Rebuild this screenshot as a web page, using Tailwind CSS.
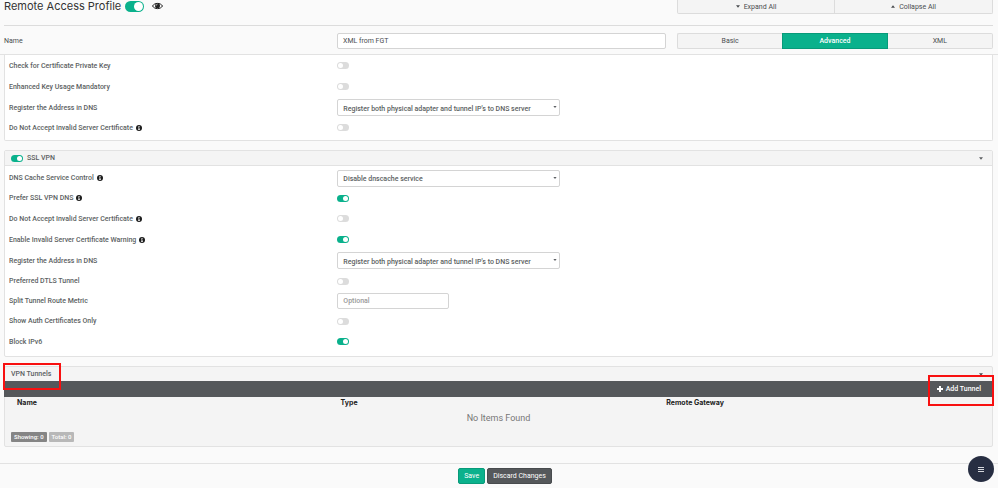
<!DOCTYPE html>
<html lang="en">
  <head>
    <meta charset="UTF-8" />
    <meta name="viewport" content="width=device-width, initial-scale=1.0" />
    <title>Remote Access Profile</title>
    <!-- Tailwind CSS CDN -->
    <script src="https://cdn.jsdelivr.net/npm/@tailwindcss/browser@4"></script>
    <style>
      body {
        font-family: "Roboto", "Liberation Sans", sans-serif;
      }

      /* Switches */
      .switch {
        appearance: none;
        display: block;
        flex: none;
        width: 12px;
        height: 7px;
        padding: 1px;
        border-radius: 7px;
        background: #dcdcdc;
      }
      .switch::before {
        content: "";
        display: block;
        width: 5px;
        height: 5px;
        border-radius: 5px;
        background: #fff;
      }
      .switch:checked {
        background: #0ab18c;
      }
      .switch:checked::before {
        margin-left: auto;
      }
      .switch-lg {
        width: 19px;
        height: 11px;
      }
      .switch-lg::before {
        width: 9px;
        height: 9px;
      }
    </style>
  </head>
  <body class="bg-[#fafafa] min-h-screen flex flex-col text-[7px] leading-[10px] text-[#4a4d50]">
    <!-- Shared icons -->
    <svg class="hidden">
      <symbol id="info" viewBox="0 0 12 12">
        <circle cx="6" cy="6" r="6" fill="#1c1c1c" />
        <path d="M5 2h2v2H5zM4 5h3v4h1v1H4V9h1V6H4z" fill="#fff" />
      </symbol>
      <symbol id="caret-down" viewBox="0 0 8 5">
        <path d="M0 0h8L4 5z" fill="currentColor" />
      </symbol>
      <symbol id="caret-up" viewBox="0 0 8 5">
        <path d="M0 5h8L4 0z" fill="currentColor" />
      </symbol>
    </svg>

    <header class="ml-1 mr-[5px]">
      <div class="h-[26px] border-b border-[#dcdcdc] grid grid-cols-[673fr_316fr] items-start">
        <div class="flex items-center h-3">
          <h1 class="text-[11px] leading-3 text-[#333] font-[Inter]">Remote Access Profile</h1>
          <input type="checkbox" checked aria-label="Enable profile" class="switch switch-lg ml-1" />
          <button type="button" aria-label="Preview" class="ml-2">
            <svg class="w-[11px] h-2 block" viewBox="0 0 22 16">
              <path d="M1 8C5 1 17 1 21 8C17 15 5 15 1 8z" fill="none" stroke="#222" stroke-width="2" />
              <circle cx="11" cy="7.5" r="5" fill="#222" />
              <path d="M8 7.500a3 3 0 0 1 3-3" fill="none" stroke="#fff" stroke-width="1.200" />
            </svg>
          </button>
        </div>
        <div class="grid grid-cols-2 h-[14px] bg-[#f4f4f4] border border-t-0 border-[#dcdcdc] rounded-b-xs">
          <button type="button" class="flex items-center justify-center gap-1 border-r border-[#dcdcdc]">
            <svg class="w-1 h-[3px]"><use href="#caret-down" /></svg>Expand All
          </button>
          <button type="button" class="flex items-center justify-center gap-1">
            <svg class="w-1 h-[3px]"><use href="#caret-up" /></svg>Collapse All
          </button>
        </div>
      </div>
      <div class="h-7 grid grid-cols-[333fr_340fr_316fr] items-center pt-px">
        <label for="name">Name</label>
        <div class="pr-[11px]">
          <input id="name" type="text" value="XML from FGT" class="block w-full h-4 px-[5px] bg-white border border-[#d4d4d4] rounded-xs" />
        </div>
        <div class="grid grid-cols-3 h-4">
          <button type="button" class="bg-[#f4f4f4] border border-r-0 border-[#dcdcdc] rounded-l-xs">Basic</button>
          <button type="button" class="bg-[#0ab18c] border border-[#089a79] text-white font-medium">Advanced</button>
          <button type="button" class="bg-[#f4f4f4] border border-l-0 border-[#dcdcdc] rounded-r-xs">XML</button>
        </div>
      </div>
    </header>

    <main class="border-t border-[#e2e2e2] grow">
      <section class="ml-1 mr-[5px] bg-white border border-t-0 border-[#e2e2e2] rounded-b-xs pb-[3px] font-medium text-[#5c5f62]">
        <div class="grid grid-cols-[1fr_2fr] items-center h-[21px] px-1">
          <label for="private-key">Check for Certificate Private Key</label>
          <input id="private-key" type="checkbox" class="switch ml-0.5" />
        </div>
        <div class="grid grid-cols-[1fr_2fr] items-center h-[21px] px-1">
          <label for="key-usage">Enhanced Key Usage Mandatory</label>
          <input id="key-usage" type="checkbox" class="switch ml-0.5" />
        </div>
        <div class="grid grid-cols-[1fr_2fr] items-center h-[21px] px-1">
          <label for="ipsec-dns">Register the Address in DNS</label>
          <div class="relative ml-0.5 w-[223px]">
            <select id="ipsec-dns" class="appearance-none block w-full h-[17px] pl-[5px] pt-0.5 bg-white border border-[#d4d4d4] rounded-xs">
              <option>Register both physical adapter and tunnel IP's to DNS server</option>
            </select>
            <svg class="absolute right-[3px] top-[7px] w-1 h-0.5"><use href="#caret-down" /></svg>
          </div>
        </div>
        <div class="grid grid-cols-[1fr_2fr] items-center h-[19px] px-1">
          <label for="ipsec-cert" class="flex items-center gap-[3px]">Do Not Accept Invalid Server Certificate<svg class="size-[6px]"><use href="#info" /></svg></label>
          <input id="ipsec-cert" type="checkbox" class="switch ml-0.5" />
        </div>
      </section>

      <section class="ml-1 mr-[5px] mt-[9px] bg-white border border-[#e2e2e2] rounded-xs pb-1 font-medium text-[#5c5f62]">
        <div class="flex items-center h-[15px] pl-[6px] pr-[9px] bg-[#f4f4f4] border-b border-[#e2e2e2]">
          <input id="ssl-vpn" type="checkbox" checked class="switch" />
          <label for="ssl-vpn" class="ml-1">SSL VPN</label>
          <button type="button" aria-label="Collapse SSL VPN" class="ml-auto">
            <svg class="block w-1 h-[3px]"><use href="#caret-down" /></svg>
          </button>
        </div>
        <div class="grid grid-cols-[1fr_2fr] items-center h-5 px-1 mt-0.5">
          <label for="dns-cache" class="flex items-center gap-[3px]">DNS Cache Service Control<svg class="size-[6px]"><use href="#info" /></svg></label>
          <div class="relative ml-0.5 w-[223px]">
            <select id="dns-cache" class="appearance-none block w-full h-[17px] pl-[5px] pt-0.5 bg-white border border-[#d4d4d4] rounded-xs">
              <option>Disable dnscache service</option>
            </select>
            <svg class="absolute right-[3px] top-[7px] w-1 h-0.5"><use href="#caret-down" /></svg>
          </div>
        </div>
        <div class="grid grid-cols-[1fr_2fr] items-center h-5 px-1">
          <label for="prefer-dns" class="flex items-center gap-[3px]">Prefer SSL VPN DNS<svg class="size-[6px]"><use href="#info" /></svg></label>
          <input id="prefer-dns" type="checkbox" checked class="switch ml-0.5" />
        </div>
        <div class="grid grid-cols-[1fr_2fr] items-center h-[21px] px-1">
          <label for="ssl-cert" class="flex items-center gap-[3px]">Do Not Accept Invalid Server Certificate<svg class="size-[6px]"><use href="#info" /></svg></label>
          <input id="ssl-cert" type="checkbox" class="switch ml-0.5" />
        </div>
        <div class="grid grid-cols-[1fr_2fr] items-center h-[21px] px-1">
          <label for="cert-warning" class="flex items-center gap-[3px]">Enable Invalid Server Certificate Warning<svg class="size-[6px]"><use href="#info" /></svg></label>
          <input id="cert-warning" type="checkbox" checked class="switch ml-0.5" />
        </div>
        <div class="grid grid-cols-[1fr_2fr] items-center h-[21px] px-1">
          <label for="ssl-dns">Register the Address in DNS</label>
          <div class="relative ml-0.5 w-[223px]">
            <select id="ssl-dns" class="appearance-none block w-full h-[17px] pl-[5px] pt-0.5 bg-white border border-[#d4d4d4] rounded-xs">
              <option>Register both physical adapter and tunnel IP's to DNS server</option>
            </select>
            <svg class="absolute right-[3px] top-[7px] w-1 h-0.5"><use href="#caret-down" /></svg>
          </div>
        </div>
        <div class="grid grid-cols-[1fr_2fr] items-center h-5 px-1">
          <label for="dtls">Preferred DTLS Tunnel</label>
          <input id="dtls" type="checkbox" class="switch ml-0.5" />
        </div>
        <div class="grid grid-cols-[1fr_2fr] items-center h-5 px-1">
          <label for="metric">Split Tunnel Route Metric</label>
          <input id="metric" type="text" placeholder="Optional" class="ml-0.5 w-28 h-4 px-[5px] bg-white border border-[#d4d4d4] rounded-xs placeholder:text-[#999]" />
        </div>
        <div class="grid grid-cols-[1fr_2fr] items-center h-5 px-1">
          <label for="auth-certs">Show Auth Certificates Only</label>
          <input id="auth-certs" type="checkbox" class="switch ml-0.5" />
        </div>
        <div class="grid grid-cols-[1fr_2fr] items-center h-[21px] px-1">
          <label for="ipv6">Block IPv6</label>
          <input id="ipv6" type="checkbox" checked class="switch ml-0.5" />
        </div>
      </section>

      <section class="relative ml-1 mr-[5px] mt-[9px] bg-[#f4f4f4] border border-[#e2e2e2] rounded-xs">
        <div class="flex items-center h-[14px] pl-[6px] pr-[9px]">
          <h2 class="font-medium text-[#5c5f62]">VPN Tunnels</h2>
          <button type="button" aria-label="Collapse VPN Tunnels" class="ml-auto">
            <svg class="block w-1 h-[3px]"><use href="#caret-down" /></svg>
          </button>
        </div>
        <div class="flex justify-end h-4 -mx-px bg-[#55585b]">
          <button type="button" class="flex items-center gap-[3px] pr-3 text-white font-medium">
            <svg class="size-[6px]" viewBox="0 0 6 6"><path d="M3 0v6M0 3h6" stroke="#fff" stroke-width="2" /></svg>
            Add Tunnel
          </button>
        </div>
        <table class="w-full table-fixed text-left">
          <thead>
            <tr class="h-3 text-[#222] font-[Inter]">
              <th class="w-[34%] pl-3 font-bold">Name</th>
              <th class="w-[33%] font-bold">Type</th>
              <th class="w-[33%] font-bold">Remote Gateway</th>
            </tr>
          </thead>
          <tbody>
            <tr>
              <td colspan="3" class="h-[18px] text-center text-[9px] text-[#777]">No Items Found</td>
            </tr>
          </tbody>
        </table>
        <div class="flex gap-0.5 pl-[6px] pt-[5px] pb-1 text-[6px] text-white font-medium">
          <span class="px-[3px] bg-[#858585] rounded-[1px]">Showing: 0</span>
          <span class="px-[3px] bg-[#b8b8b8] rounded-[1px]">Total: 0</span>
        </div>
        <!-- Callouts -->
        <div class="absolute left-[-2px] top-[-4px] w-[58px] h-[27px] border-2 border-[#f81010]"></div>
        <div class="absolute right-[-2px] top-2 w-[66px] h-[31px] border-2 border-[#f81010]"></div>
      </section>
    </main>

    <footer class="flex justify-center gap-0.5 h-[25px] pt-1 pl-3 border-t border-[#e2e2e2]">
      <button type="button" class="h-4 px-[5px] bg-[#0ab18c] border border-[#089a79] rounded-xs text-white">Save</button>
      <button type="button" class="h-4 px-[5px] bg-[#55585b] border border-[#484b4e] rounded-xs text-white">Discard Changes</button>
    </footer>

    <button type="button" aria-label="Menu" class="fixed right-1 bottom-[6px] size-[26px] rounded-full bg-[#272e42] flex items-center justify-center">
      <svg class="w-[6px] h-[5px]" viewBox="0 0 6 5">
        <path d="M0 .5h6M0 2.500h6M0 4.500h6" stroke="#d5d7dc" />
      </svg>
    </button>
  </body>
</html>
